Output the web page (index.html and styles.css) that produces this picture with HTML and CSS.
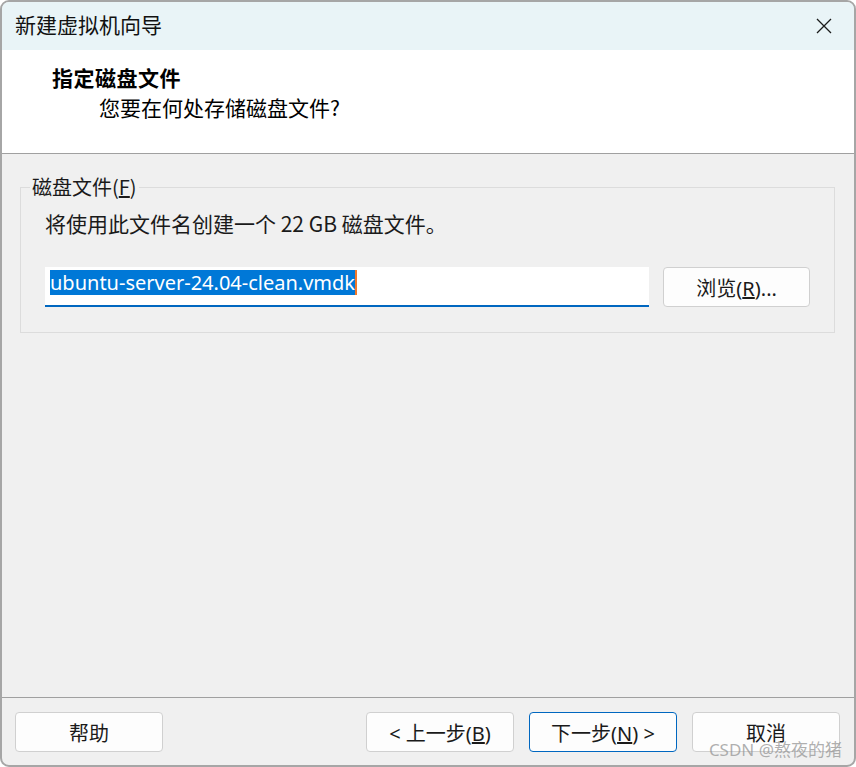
FILE: index.html
```html
<!DOCTYPE html>
<html lang="zh-CN">
<head>
  <meta charset="UTF-8">
  <title>新建虚拟机向导</title>
  <link rel="stylesheet" href="styles.css">
</head>
<body>
  <div class="window">
    <!-- Titelleiste -->
    <div class="titlebar">
      <span class="title">新建虚拟机向导</span>
      <svg class="close" width="16" height="16" viewBox="0 0 16 16">
        <path d="M1 1 L15 15 M15 1 L1 15" stroke="#1b1b1b" stroke-width="1.3" fill="none"/>
      </svg>
    </div>

    <!-- Kopfbereich -->
    <div class="header">
      <div class="header-title">指定磁盘文件</div>
      <div class="header-sub">您要在何处存储磁盘文件?</div>
    </div>

    <!-- Inhalt -->
    <div class="content">
      <fieldset class="group">
        <legend>磁盘文件(<u>F</u>)</legend>
        <div class="desc">将使用此文件名创建一个 22 GB 磁盘文件。</div>
        <div class="file-row">
          <div class="file-input"><span class="selected">ubuntu-server-24.04-clean.vmdk</span><span class="caret"></span></div>
          <button class="btn btn-browse">浏览(<u>R</u>)...</button>
        </div>
      </fieldset>
    </div>

    <!-- Fußleiste -->
    <div class="footer">
      <button class="btn">帮助</button>
      <div class="nav">
        <button class="btn">&lt; 上一步(<u>B</u>)</button>
        <button class="btn btn-default">下一步(<u>N</u>) &gt;</button>
        <button class="btn">取消</button>
      </div>
    </div>

    <div class="watermark">CSDN @熬夜的猪</div>
  </div>
</body>
</html>
```

FILE: styles.css
```css
* {
  margin: 0;
  padding: 0;
  box-sizing: border-box;
}

html, body {
  background: #fff;
}

body {
  width: 856px;
  height: 767px;
  font-family: "Noto Sans", "Noto Sans CJK SC", sans-serif;
  font-size: 21px;
  color: #1a1a1a;
  overflow: hidden;
}

/* Fenster */
.window {
  position: relative;
  width: 856px;
  height: 767px;
  border: 2px solid #a6a6a6;
  border-radius: 9px;
  background: #f0f0f0;
  display: flex;
  flex-direction: column;
  overflow: hidden;
}

/* Titelleiste */
.titlebar {
  height: 48px;
  background: #e9f4f7;
  display: flex;
  align-items: center;
  justify-content: space-between;
  padding: 0 22px 4px 13px;
}

.title {
  font-family: "Noto Sans CJK SC", sans-serif;
  font-size: 21px;
  color: #111;
}

.close {
  margin-top: 4px;
}

/* Kopfbereich */
.header {
  height: 104px;
  background: #fff;
  border-bottom: 1px solid #a0a0a0;
  padding: 12px 0 0 50px;
}

.header-title {
  font-family: "Noto Sans CJK SC", sans-serif;
  font-size: 21px;
  letter-spacing: 0.5px;
  font-weight: bold;
  line-height: 30px;
  color: #000;
}

.header-sub {
  font-family: "Noto Sans CJK SC", sans-serif;
  font-size: 21px;
  line-height: 30px;
  padding-left: 47px;
  color: #000;
}

/* Inhalt */
.content {
  flex: 1;
  padding: 21px 19px 0 18px;
}

.group {
  min-width: 0;
  border: 1px solid #dcdcdc;
  padding: 10px 24px 24px 24px;
  height: 158px;
}

.group legend {
  margin-left: -15px;
  padding: 0 2px;
  font-family: "Noto Sans CJK SC", sans-serif;
  font-size: 20px;
  line-height: 24px;
  color: #1a1a1a;
}

.desc {
  font-family: "Noto Sans CJK SC", sans-serif;
  font-size: 21px;
  line-height: 28px;
}

.file-row {
  display: flex;
  gap: 14px;
  margin-top: 30px;
}

.file-input {
  width: 605px;
  height: 40px;
  background: #fff;
  border-bottom: 2px solid #0067c0;
  padding: 3px 0 0 5px;
  display: flex;
  align-items: flex-start;
}

.selected {
  background: #0078d7;
  color: #fff;
  font-size: 20px;
  line-height: 25px;
}

.caret {
  width: 2px;
  height: 25px;
  background: #f0782a;
}

/* Schaltflächen */
.btn {
  width: 148px;
  height: 40px;
  background: #fdfdfd;
  border: 1px solid #d0d0d0;
  border-radius: 4px;
  font-family: "Noto Sans", "Noto Sans CJK SC", sans-serif;
  font-size: 20px;
  color: #1a1a1a;
}

.btn-browse {
  width: 147px;
}

.btn-default {
  border: 1px solid #0067c0;
}

/* Fußleiste */
.footer {
  height: 68px;
  border-top: 1px solid #a0a0a0;
  display: flex;
  justify-content: space-between;
  padding: 14px 14px 0 13px;
}

.nav {
  display: flex;
  gap: 15px;
}

.watermark {
  position: absolute;
  right: 12px;
  bottom: 4px;
  font-family: "Noto Sans", "Noto Sans CJK SC", sans-serif;
  font-size: 17px;
  color: rgba(150, 150, 150, 0.75);
}
```
